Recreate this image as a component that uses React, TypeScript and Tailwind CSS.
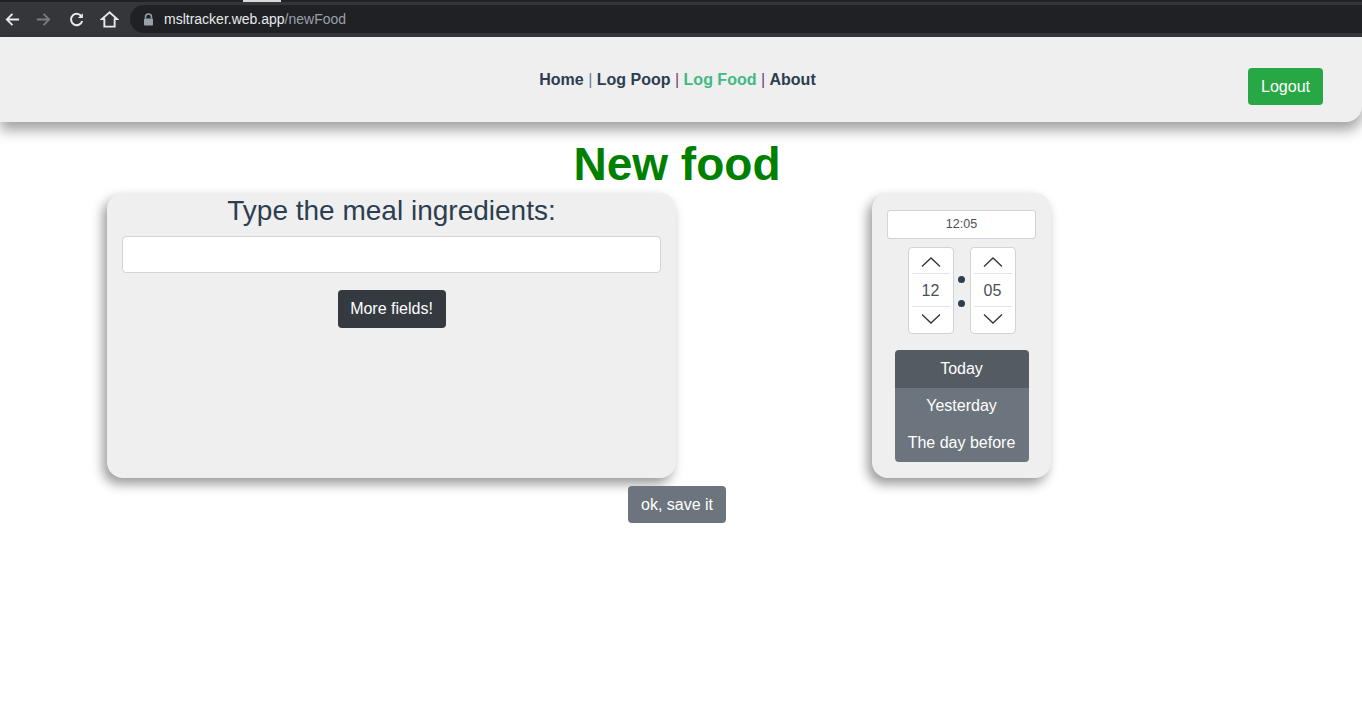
import React from "react";

const font = { fontFamily: '"Liberation Sans", Arial, sans-serif' };

function ChevronUp() {
  return (
    <svg width="20" height="10" viewBox="0 0 20 10" fill="none">
      <polyline points="1,9.5 10,1 19,9.5" stroke="#333" strokeWidth="1.3" />
    </svg>
  );
}
function ChevronDown() {
  return (
    <svg width="20" height="10" viewBox="0 0 20 10" fill="none">
      <polyline points="1,0.5 10,9 19,0.5" stroke="#333" strokeWidth="1.3" />
    </svg>
  );
}

function Spinner({ value }: { value: string }) {
  return (
    <div className="w-[46px] h-[87px] bg-white border border-[#ced4da] rounded-[4px] flex flex-col items-center px-[3px]">
      <div className="h-[26px] w-full flex items-center justify-center border-b border-[#e3e3e3] pt-[2px]">
        <ChevronUp />
      </div>
      <div className="h-[33px] w-full flex items-center justify-center text-[16px] text-[#495057] border-b border-[#e3e3e3] pt-[2px]">
        {value}
      </div>
      <div className="h-[26px] w-full flex items-center justify-center pb-[2px]">
        <ChevronDown />
      </div>
    </div>
  );
}

export default function App() {
  return (
    <div className="w-[1362px] min-h-[728px] bg-white overflow-hidden" style={font}>
      {/* Browser chrome */}
      <div className="h-[37px] bg-[#35363a] flex flex-col">
        <div className="flex h-[2px]">
          <div className="w-[243px] bg-[#202124]" />
          <div className="w-[38px] bg-[#d9d9d9]" />
          <div className="flex-1 bg-[#202124]" />
        </div>
        <div className="flex items-start pt-[3px] flex-1">
          <div className="flex items-center h-[28px]">
            <svg className="ml-[4px]" width="17" height="17" viewBox="0 0 24 24" fill="none" stroke="#e8eaed" strokeWidth="2.6" strokeLinecap="square">
              <path d="M20 12H5M11 5l-7 7 7 7" />
            </svg>
            <svg className="ml-[14px]" width="17" height="17" viewBox="0 0 24 24" fill="none" stroke="#7b7c7e" strokeWidth="2.6" strokeLinecap="square">
              <path d="M4 12h15M13 5l7 7-7 7" />
            </svg>
            <svg className="ml-[16px]" width="17" height="17" viewBox="0 0 24 24" fill="none" stroke="#e8eaed" strokeWidth="2.8">
              <path d="M19.5 8.5A8 8 0 1 0 20 14" />
              <path d="M21 3v7h-7z" fill="#e8eaed" strokeWidth="0" />
            </svg>
            <svg className="ml-[15px]" width="19" height="19" viewBox="0 0 24 24" fill="none" stroke="#e8eaed" strokeWidth="2.4" strokeLinejoin="miter">
              <path d="M12 3L2.5 11.5H5.5V21h13v-9.5h3z" />
            </svg>
          </div>
          <div className="ml-[11px] flex-1 h-[28px] bg-[#202124] rounded-l-full flex items-center pl-[13px]">
            <svg width="11" height="13" viewBox="0 0 11 13">
              <path d="M2.5 5.5V4a3 3 0 0 1 6 0v1.5" fill="none" stroke="#9aa0a6" strokeWidth="1.5" />
              <rect x="1" y="5.5" width="9" height="7" rx="1" fill="#9aa0a6" />
            </svg>
            <span className="ml-[10px] text-[14px] text-[#e8eaed] leading-none">
              msltracker.web.app<span className="text-[#9aa0a6]">/newFood</span>
            </span>
          </div>
        </div>
      </div>

      {/* Navbar */}
      <div className="h-[85px] bg-[#efefef] rounded-br-[16px] shadow-[0_8px_14px_rgba(0,0,0,0.38)] grid grid-cols-[1fr_auto_1fr] items-start pt-[30px] pr-[7px] relative z-10">
        <div />
        <nav className="text-[16px] leading-[24px] font-bold text-[#2c3e50] pt-[1px]">
          <span>Home</span>
          <span className="font-normal text-[#5b7fa6]"> | </span>
          <span>Log Poop</span>
          <span className="font-normal text-[#6b4a7a]"> | </span>
          <span className="text-[#42b983]">Log Food</span>
          <span className="font-normal text-[#6b4a7a]"> | </span>
          <span>About</span>
        </nav>
        <div className="flex justify-end pr-[32px] pt-[1px]">
          <button className="h-[37px] w-[75px] bg-[#28a745] text-white text-[16px] rounded-[4px]">
            Logout
          </button>
        </div>
      </div>

      {/* Main */}
      <div className="w-[1354px] flex flex-col items-center">
        <h1 className="mt-[16px] text-[46px] leading-[53px] font-bold text-[#008000]">New food</h1>

        <div className="mt-[2px] w-full flex items-stretch pl-[107px]">
          <div className="w-[569px] h-[285px] bg-[#efefef] rounded-[16px] shadow-[-4px_6px_12px_rgba(0,0,0,0.4)] flex flex-col items-center px-[15px]">
            <div className="text-[28px] leading-[34px] text-[#2c3e50] pt-[1px]">Type the meal ingredients:</div>
            <div className="mt-[8px] w-full h-[37px] bg-white border border-[#ced4da] rounded-[4px]" />
            <button className="mt-[17px] h-[38px] w-[108px] bg-[#343a40] text-white text-[16px] rounded-[4px]">
              More fields!
            </button>
          </div>

          <div className="ml-[196px] w-[179px] h-[285px] bg-[#efefef] rounded-[16px] shadow-[-4px_6px_12px_rgba(0,0,0,0.4)] flex flex-col items-center px-[15px] pt-[17px]">
            <div className="w-full h-[29px] bg-white border border-[#ced4da] rounded-[3px] flex items-center justify-center text-[12.5px] text-[#495057]">
              12:05
            </div>
            <div className="mt-[8px] flex items-center">
              <Spinner value="12" />
              <div className="w-[16px] flex flex-col items-center gap-[17px] pt-[2px]">
                <div className="w-[7px] h-[7px] rounded-full bg-[#2c3e50]" />
                <div className="w-[7px] h-[7px] rounded-full bg-[#2c3e50]" />
              </div>
              <Spinner value="05" />
            </div>
            <div className="mt-[16px] w-[134px] rounded-[4px] overflow-hidden flex flex-col text-white text-[16px]">
              <div className="h-[38px] bg-[#545b62] flex items-center justify-center">Today</div>
              <div className="h-[35px] bg-[#6c757d] flex items-center justify-center">Yesterday</div>
              <div className="h-[39px] bg-[#6c757d] flex items-center justify-center">The day before</div>
            </div>
          </div>
        </div>

        <button className="mt-[8px] h-[37px] w-[98px] bg-[#6c757d] text-white text-[16px] rounded-[4px]">
          ok, save it
        </button>
      </div>
    </div>
  );
}
